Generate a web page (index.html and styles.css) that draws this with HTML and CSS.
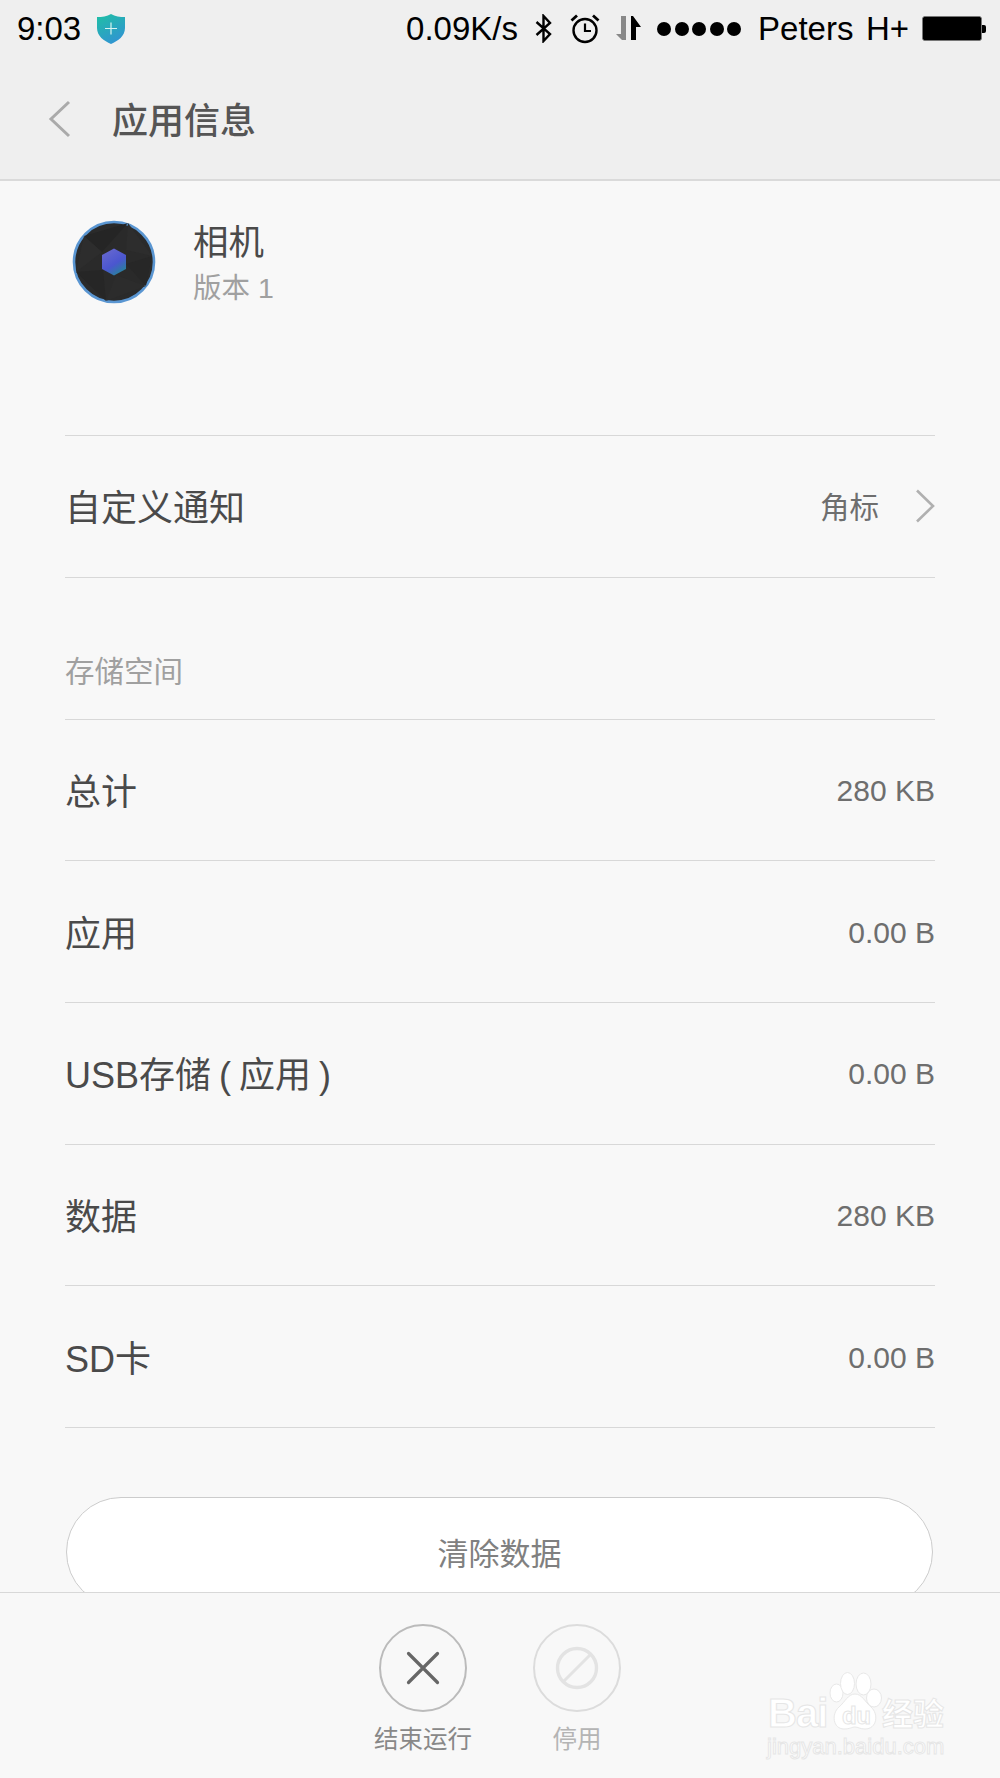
FILE: index.html
```html
<!DOCTYPE html>
<html lang="zh-CN">
<head>
<meta charset="utf-8">
<title>应用信息</title>
<link rel="stylesheet" href="styles.css">
</head>
<body>
<div class="phone">
  <header class="top">
    <div class="status">
      <span class="time">9:03</span>
      <svg class="shield" width="30" height="31" viewBox="0 0 30 31"><defs><linearGradient id="sg" x1="0" y1="0" x2="0.5" y2="1"><stop offset="0" stop-color="#1fc0a4"/><stop offset="1" stop-color="#3096d0"/></linearGradient></defs><path d="M15 1 C19 3.500 24 4 29 4 L29 15 C29 23 22 28 15 31 C8 28 1 23 1 15 L1 4 C6 4 11 3.500 15 1Z" fill="url(#sg)"/><path d="M15 9.500V21.500M9 15.500H21" stroke="#d8f3ef" stroke-width="1.200"/></svg>
      <span class="speed">0.09K/s</span>
      <svg class="ico-bt" width="20" height="29" viewBox="0 0 20 29"><path d="M2.500 8 L16 20 L9.500 27 V2 L16 9 L2.500 21" fill="none" stroke="#000" stroke-width="2.400"/></svg>
      <svg class="ico-alarm" width="30" height="30" viewBox="0 0 30 30"><circle cx="15" cy="16.500" r="11.500" fill="none" stroke="#000" stroke-width="2.400"/><path d="M15 9.500V17H21" fill="none" stroke="#000" stroke-width="2.200"/><path d="M1.500 6.500 L7 1.500M28.500 6.500 L23 1.500" stroke="#000" stroke-width="2.800"/></svg>
      <svg class="ico-data" width="26" height="25" viewBox="0 0 26 25"><path d="M0 18 L5 18 L5 0 H10 V24 H6 Z" fill="#888"/><path d="M15 24 V0 H17 L25 11 H20 V24Z" fill="#000"/></svg>
      <span class="dots"><i></i><i></i><i></i><i></i><i></i></span>
      <span class="carrier">Peters</span>
      <span class="net">H+</span>
      <span class="battery"><span class="cell"></span><span class="nub"></span></span>
    </div>
    <div class="bar">
      <svg class="back" width="24" height="38" viewBox="0 0 24 38"><path d="M21 2 L3 19 L21 36" fill="none" stroke="#aaa" stroke-width="3"/></svg>
      <h1>应用信息</h1>
    </div>
  </header>

  <main class="content">
    <section class="app">
      <svg class="app-icon" width="84" height="84" viewBox="0 0 84 84">
        <defs><linearGradient id="hx" x1="0" y1="0" x2="0.6" y2="1"><stop offset="0" stop-color="#6b6bd0"/><stop offset="0.65" stop-color="#4b56cf"/><stop offset="1" stop-color="#2a7f9f"/></linearGradient></defs>
        <circle cx="42" cy="42" r="40" fill="#2a2a2a" stroke="#5a96d2" stroke-width="2.600"/>
        <path d="M12 16 L30 32 L56 3 Z" fill="#252525"/>
        <path d="M56 3 L54 30 L80 36 Z" fill="#2d2d2d"/>
        <path d="M80 36 L54 44 L74 66 Z" fill="#272727"/>
        <path d="M74 66 L44 55 L34 81 Z" fill="#2c2c2c"/>
        <path d="M34 81 L31 50 L4 52 Z" fill="#262626"/>
        <path d="M4 52 L30 32 L12 16 Z" fill="#2d2d2d"/>
        <path d="M42 28.500 L54 35 L54 49 L42 55.500 L30 49 L30 35Z" fill="url(#hx)"/>
      </svg>
      <div class="app-text">
        <div class="app-name">相机</div>
        <div class="app-ver">版本 1</div>
      </div>
    </section>

    <div class="row first"><span class="label">自定义通知</span><span class="badge-val">角标</span>
      <svg class="chev" width="20" height="34" viewBox="0 0 20 34"><path d="M2 1.500 L18 17 L2 32.500" fill="none" stroke="#b0b0b0" stroke-width="2.600"/></svg>
    </div>

    <div class="group-title">存储空间</div>
    <div class="row"><span class="label">总计</span><span class="value">280 KB</span></div>
    <div class="row"><span class="label">应用</span><span class="value">0.00 B</span></div>
    <div class="row"><span class="label">USB存储 ( 应用 )</span><span class="value">0.00 B</span></div>
    <div class="row"><span class="label">数据</span><span class="value">280 KB</span></div>
    <div class="row"><span class="label">SD卡</span><span class="value">0.00 B</span></div>

    <button class="clear">清除数据</button>
  </main>

  <footer class="actions">
    <div class="action">
      <span class="circle"><svg width="36" height="36" viewBox="0 0 36 36"><path d="M3.500 3.500 L32.500 32.500 M32.500 3.500 L3.500 32.500" stroke="#666" stroke-width="3.200" stroke-linecap="round"/></svg></span>
      <span class="cap">结束运行</span>
    </div>
    <div class="action off">
      <span class="circle"><svg width="44" height="44" viewBox="0 0 44 44"><circle cx="22" cy="22" r="19.500" fill="none" stroke="#e3e3e3" stroke-width="3.400"/><path d="M8 36 L36 8" stroke="#e3e3e3" stroke-width="3"/></svg></span>
      <span class="cap">停用</span>
    </div>
  </footer>

  <div class="watermark">
    <svg class="paw" width="54" height="58" viewBox="0 0 54 58"><g fill="#fff" stroke="#e8e8e8" stroke-width="1"><ellipse cx="7.500" cy="21" rx="6.500" ry="9"/><ellipse cx="18.500" cy="11.500" rx="7" ry="11"/><ellipse cx="34.500" cy="12" rx="7.500" ry="11"/><ellipse cx="45" cy="26" rx="7.500" ry="9"/><path d="M26 22 C33 22 36 30 42 35 C50 42 48 57 36 57 C31 57 29 55 26 55 C23 55 21 57 15 57 C4 57 2 42 10 35 C16 30 19 22 26 22Z"/></g></svg>
    <span class="wm-bai">Bai</span><span class="wm-du">du</span><span class="wm-jy">经验</span>
    <div class="wm-url">jingyan.baidu.com</div>
  </div>
</div>
</body>
</html>
```
FILE: styles.css
```css
* { box-sizing: border-box; }
html, body { margin: 0; padding: 0; }
body {
  width: 1000px;
  height: 1778px;
  overflow: hidden;
  background: #f8f8f8;
  font-family: "Liberation Sans", "Noto Sans CJK SC", sans-serif;
  color: #444;
}
.phone {
  position: relative;
  width: 1000px;
  height: 1778px;
  display: flex;
  flex-direction: column;
  overflow: hidden;
}
.top {
  flex: none;
  height: 181px;
  background: #efefef;
  border-bottom: 2px solid #dadada;
}
.status {
  height: 56px;
  display: flex;
  align-items: center;
  padding: 1px 14px 0 17px;
  font-size: 33px;
  color: #000;
}
.shield { margin-left: 15px; }
.speed { margin-left: auto; margin-right: 16px; }
.ico-bt { margin-right: 16px; }
.ico-alarm { margin-right: 16px; }
.ico-data { margin-right: 15px; }
.dots { display: flex; gap: 3.500px; margin-right: 17px; }
.dots i { width: 14px; height: 14px; border-radius: 50%; background: #000; }
.carrier { margin-right: 12.500px; }
.net { margin-right: 13px; }
.battery { display: flex; align-items: center; }
.cell {
  width: 60px;
  height: 25px;
  background: #000;
  border: 1px solid #777;
  outline: 1px solid #000;
  outline-offset: -2px;
  border-radius: 3px;
}
.nub { width: 4px; height: 8px; background: #000; border-radius: 0 2px 2px 0; }
.bar {
  height: 123px;
  display: flex;
  align-items: center;
  padding: 3px 0 0 48px;
}
.back { margin-right: 40px; }
.bar h1 {
  margin: -2px 0 0;
  font-family: "Noto Sans CJK SC", sans-serif;
  font-size: 36px;
  font-weight: 500;
  color: #555;
}
.content {
  flex: 1;
  min-height: 0;
  overflow: hidden;
  padding: 0 65px;
}
.app {
  height: 255px;
  display: flex;
  align-items: flex-start;
  padding: 39px 0 0 7px;
  border-bottom: 1px solid #d8d8d8;
}
.app-text { margin-left: 37px; margin-top: -3px; }
.app-name { font-size: 35.500px; line-height: 52px; color: #4a4a4a; }
.app-ver { font-size: 28.500px; line-height: 38px; color: #a0a0a0; }
.row {
  height: 141.700px;
  display: flex;
  align-items: center;
  border-bottom: 1px solid #d8d8d8;
}
.label { font-size: 36px; color: #4a4a4a; flex: 1; word-spacing: -2px; padding-bottom: 2px; }
.value { font-size: 30px; color: #6e6e6e; padding-top: 2px; }
.badge-val { font-size: 29.500px; color: #6e6e6e; margin-right: 36px; padding-bottom: 2px; }
.group-title {
  height: 142px;
  padding-top: 74px;
  font-size: 29.500px;
  line-height: 40px;
  color: #a0a0a0;
  border-bottom: 1px solid #d8d8d8;
}
.clear {
  display: block;
  width: 867px;
  height: 110px;
  margin: 69px 0 0 1px;
  background: #fff;
  border: 1.500px solid #ccc;
  border-radius: 55px;
  font: 400 31px "Noto Sans CJK SC", sans-serif;
  color: #808080;
  padding: 0 0 2px;
}
.actions {
  flex: none;
  height: 186px;
  background: #f8f8f8;
  border-top: 1px solid #d8d8d8;
  display: flex;
  justify-content: center;
  gap: 66px;
  padding-top: 31px;
}
.action {
  width: 88px;
  display: flex;
  flex-direction: column;
  align-items: center;
}
.circle {
  width: 88px;
  height: 88px;
  flex: none;
  border: 2px solid #bbb;
  border-radius: 50%;
  display: flex;
  align-items: center;
  justify-content: center;
}
.cap {
  white-space: nowrap;
  font-size: 24.500px;
  line-height: 36px;
  margin-top: 10px;
  color: #888;
}
.action.off .circle { border-color: #dcdcdc; }
.action.off .cap { color: #b4b4b4; }
.watermark {
  position: absolute;
  left: 766px;
  top: 1668px;
  width: 180px;
  height: 100px;
  color: #fff;
  -webkit-text-stroke: 1px #e6e6e6;
}
.paw { position: absolute; left: 63px; top: 4px; }
.wm-bai {
  position: absolute; left: 2px; top: 28px;
  font: 700 40px/34px "Liberation Sans", sans-serif;
  letter-spacing: -1px;
}
.wm-du {
  position: absolute; left: 76px; top: 35px;
  font: 700 24px/26px "Liberation Sans", sans-serif;
  letter-spacing: -0.500px;
}
.wm-jy {
  position: absolute; left: 116px; top: 27px;
  font: 700 31px/34px "Noto Sans CJK SC", sans-serif;
}
.wm-url {
  position: absolute; left: 1px; top: 68px;
  font: 400 22px/22px "Liberation Sans", sans-serif;
  white-space: nowrap;
}
```
